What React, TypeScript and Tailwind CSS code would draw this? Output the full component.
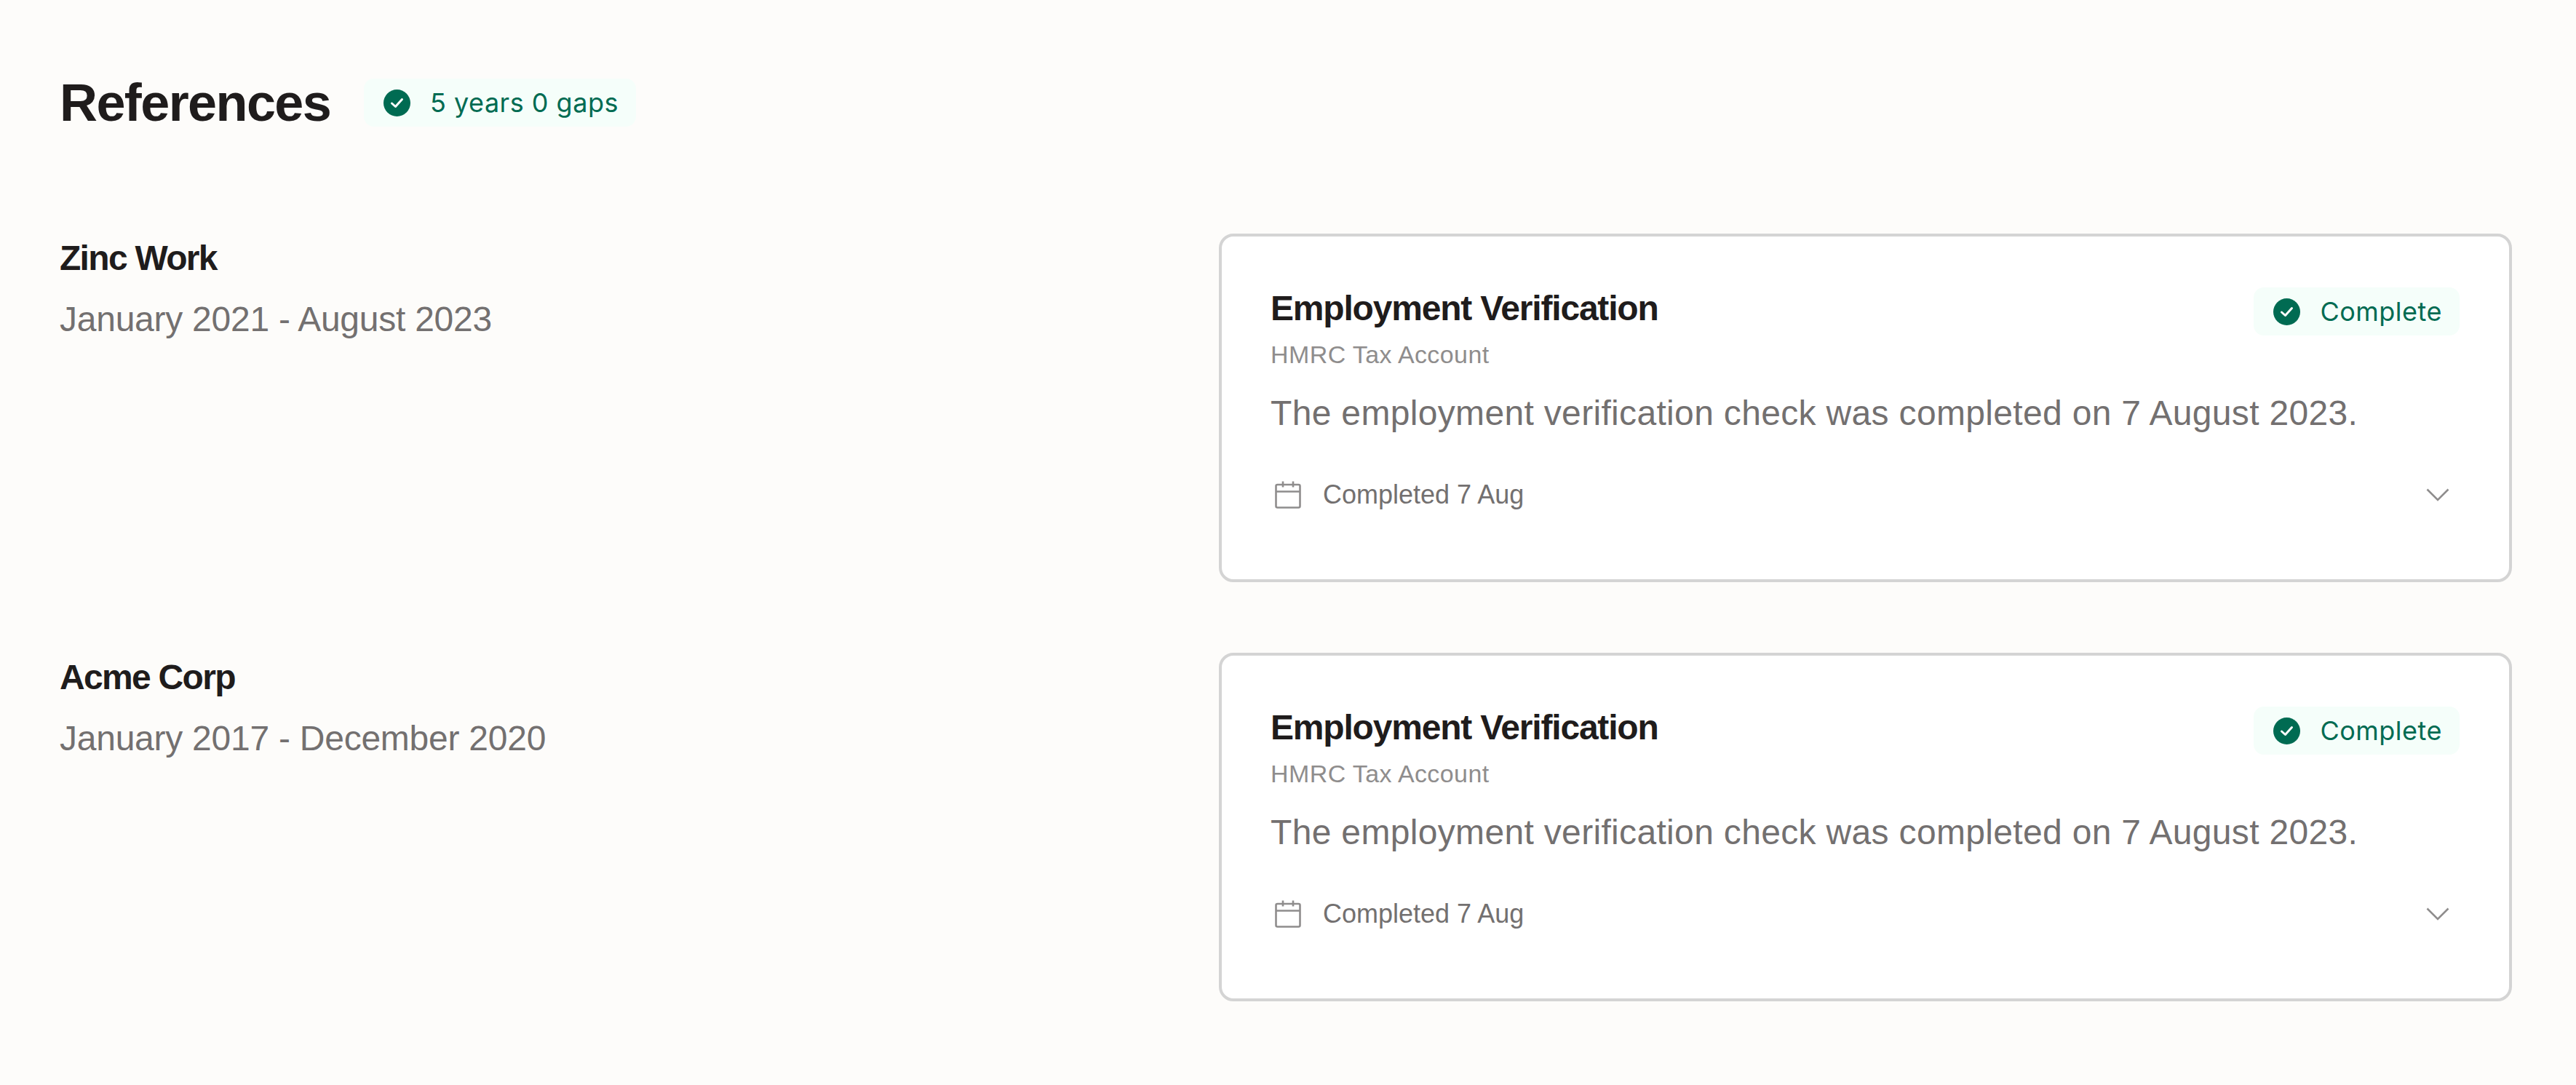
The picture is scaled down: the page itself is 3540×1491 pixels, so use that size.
import React from "react";

function CheckBadge({ label, tracking }: { label: string; tracking: string }) {
  return (
    <div className="flex h-[66px] items-center rounded-[14px] bg-[#f5fefa] pl-[27px] pr-[24px] font-['Inter',sans-serif]">
      <svg className="h-[37px] w-[37px] shrink-0" viewBox="0 0 37 37" fill="none">
        <circle cx="18.5" cy="18.5" r="18.5" fill="#006b52" />
        <path d="M11.5 19l5 4.5 9-10" stroke="#fff" strokeWidth="3" strokeLinecap="round" strokeLinejoin="round" />
      </svg>
      <span className={`ml-[27px] text-[36px] leading-[48px] text-[#006b52] ${tracking}`}>{label}</span>
    </div>
  );
}

function VerificationCard() {
  return (
    <div className="h-[479px] w-[1777px] shrink-0 rounded-[20px] border-[4px] border-[#d4d4d4] bg-white pl-[67px] pr-[68px] pt-[67px]">
      <div className="flex items-start justify-between">
        <div>
          <h3 className="text-[48px] font-bold leading-[64px] tracking-[-1.2px] text-[#1f1c1c]">Employment Verification</h3>
          <p className="mt-[7px] text-[34px] leading-[48px] tracking-[0.4px] text-[#8f8d8d]">HMRC Tax Account</p>
        </div>
        <div className="mt-[3px]">
          <CheckBadge label="Complete" tracking="tracking-[0.5px]" />
        </div>
      </div>
      <p className="mt-[25px] text-[48px] leading-[64px] tracking-[0.33px] text-[#737070]">
        The employment verification check was completed on 7 August 2023.
      </p>
      <div className="mt-[56px] flex items-center justify-between pr-[14px]">
        <div className="flex items-center">
          <svg className="ml-[6px] h-[38px] w-[36px]" viewBox="0 0 36 38" fill="none" stroke="#8f8d8d" strokeWidth="2.6">
            <rect x="1.5" y="5" width="33" height="31.5" rx="2" />
            <path d="M1.5 14.5h33M11 0.5v8M25 0.5v8" />
          </svg>
          <span className="ml-[30px] text-[36px] leading-[48px] text-[#737070]">Completed 7 Aug</span>
        </div>
        <svg className="h-[18px] w-[32px]" viewBox="0 0 32 18" fill="none" stroke="#8f8d8d" strokeWidth="2.6">
          <path d="M1.5 1.5L16 16 30.5 1.5" />
        </svg>
      </div>
    </div>
  );
}

function ReferenceRow({ company, dates }: { company: string; dates: string }) {
  return (
    <div className="flex justify-between">
      <div className="pt-[6px]">
        <h2 className="text-[48px] font-bold leading-[56px] tracking-[-1.7px] text-[#1f1c1c]">{company}</h2>
        <p className="mt-[28px] text-[48px] leading-[56px] tracking-[-0.25px] text-[#737070]">{dates}</p>
      </div>
      <VerificationCard />
    </div>
  );
}

export default function App() {
  return (
    <div className="h-[1491px] bg-[#fdfcfa] pl-[82px] pr-[88px] pt-[108px] font-['Liberation_Sans',sans-serif]">
      <div className="flex items-center">
        <h1 className="w-[385px] shrink-0 text-[72px] font-bold leading-[66px] tracking-[-1.6px] text-[#1f1c1c]">References</h1>
        <div className="ml-[33px]">
          <CheckBadge label="5 years 0 gaps" tracking="tracking-[0.5px]" />
        </div>
      </div>
      <div className="mt-[147px] flex flex-col gap-[97px]">
        <ReferenceRow company="Zinc Work" dates="January 2021 - August 2023" />
        <ReferenceRow company="Acme Corp" dates="January 2017 - December 2020" />
      </div>
    </div>
  );
}
